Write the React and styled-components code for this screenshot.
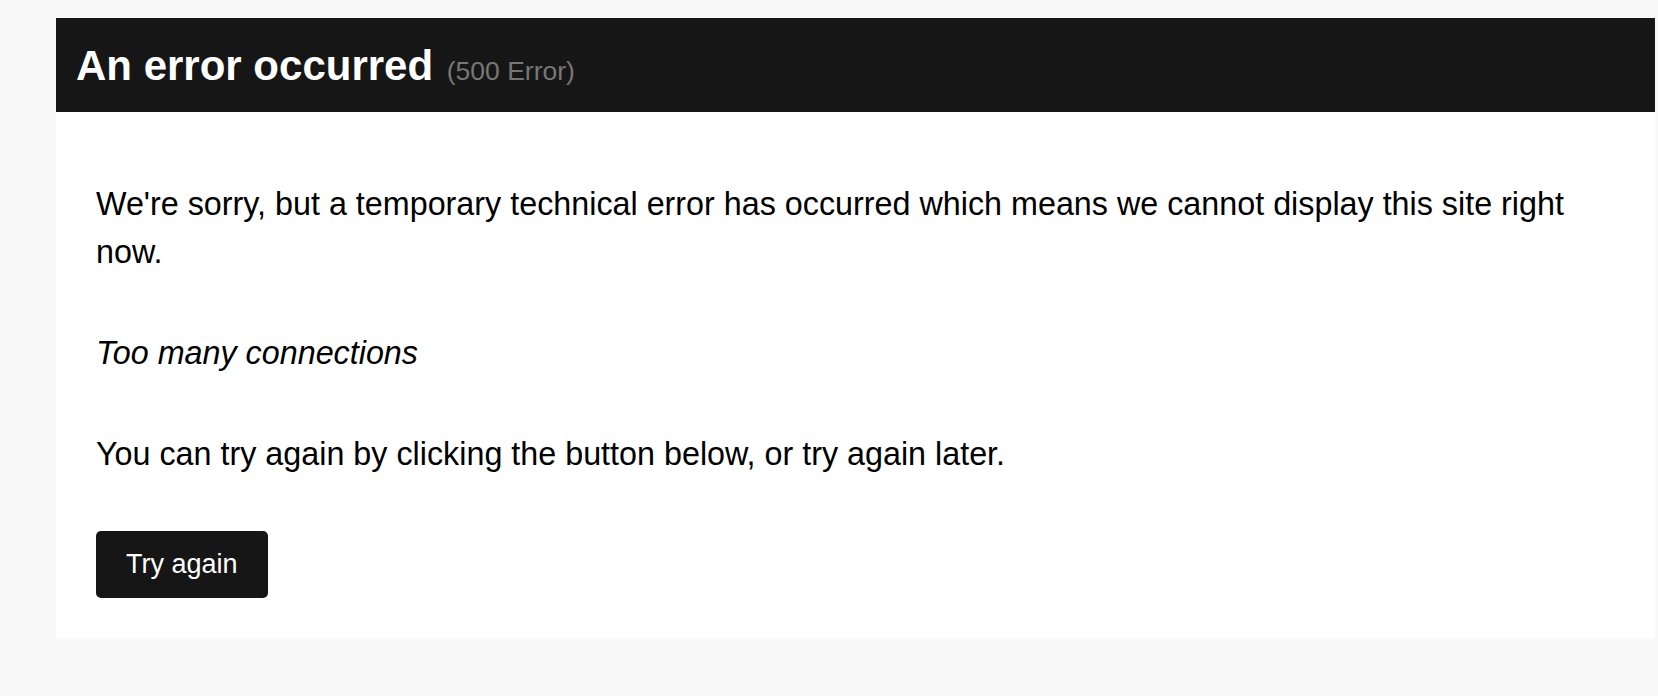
import React from 'react';
import styled, { createGlobalStyle } from 'styled-components';

const GlobalStyle = createGlobalStyle`
  html, body {
    margin: 0;
    padding: 0;
    background: #f9f9f9;
  }
  body {
    font-family: "Liberation Sans", Arial, Helvetica, sans-serif;
    color: #000;
  }
`;

const App = () => {
  return (
    <Page>
      <GlobalStyle />
      <Panel>
        <Header>
          <Title>
            An error occurred <Code>(500 Error)</Code>
          </Title>
        </Header>
        <Content>
          <Text>
            We're sorry, but a temporary technical error has occurred which means we cannot display this site right now.
          </Text>
          <Text>
            <em>Too many connections</em>
          </Text>
          <Text>You can try again by clicking the button below, or try again later.</Text>
          <Button type="button">Try again</Button>
        </Content>
      </Panel>
    </Page>
  );
};

export default App;

const Page = styled.div`
  min-height: 100vh;
  box-sizing: border-box;
  padding: 18px 3px 0 56px;
  background: #f9f9f9;
`;

const Panel = styled.main`
  background: #fff;
`;

const Header = styled.header`
  background: #161616;
  padding: 27px 20px 25px;
`;

const Title = styled.h1`
  margin: 0;
  font-size: 42px;
  line-height: 42px;
  font-weight: 700;
  color: #fff;
  white-space: nowrap;
`;

const Code = styled.small`
  margin-left: 2px;
  font-size: 26.5px;
  line-height: 1;
  font-weight: 400;
  color: #777;
`;

const Content = styled.div`
  padding: 68px 40px 40px;
`;

const Text = styled.p`
  margin: 0 0 53px;
  font-size: 32.3px;
  line-height: 48px;

  em {
    font-style: italic;
  }
`;

const Button = styled.button`
  display: block;
  height: 67px;
  padding: 0 30px;
  border: none;
  border-radius: 5px;
  background: #161616;
  color: #fff;
  font-family: inherit;
  font-size: 27px;
  line-height: 67px;
  cursor: pointer;
`;
